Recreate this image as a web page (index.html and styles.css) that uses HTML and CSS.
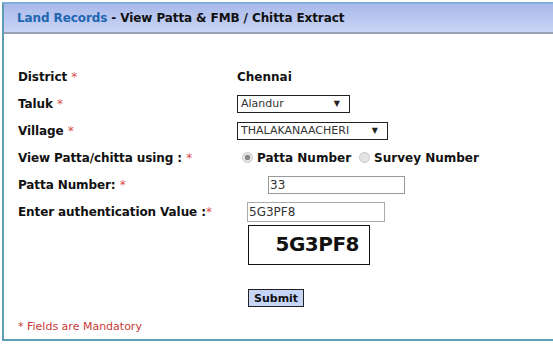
FILE: index.html
```html
<!DOCTYPE html>
<html lang="en">
<head>
  <meta charset="UTF-8" />
  <title>Land Records</title>
  <link rel="stylesheet" href="styles.css">
</head>
<body>
  <div class="panel">
    <div class="panel-head">
      <span class="crumb">Land Records</span> - View Patta &amp; FMB / Chitta Extract
    </div>
    <div class="panel-body">
      <div class="row">
        <div class="lbl">District <span class="req">*</span></div>
        <div class="val val-text">Chennai</div>
      </div>
      <div class="row">
        <div class="lbl">Taluk <span class="req">*</span></div>
        <div class="val"><div class="sel sel-taluk">Alandur <span class="arrow">&#9660;</span></div></div>
      </div>
      <div class="row">
        <div class="lbl">Village <span class="req">*</span></div>
        <div class="val"><div class="sel sel-village">THALAKANAACHERI <span class="arrow">&#9660;</span></div></div>
      </div>
      <div class="row">
        <div class="lbl">View Patta/chitta using : <span class="req">*</span></div>
        <div class="val radios">
          <span class="radio on"></span><span class="opt">Patta Number</span>
          <span class="radio"></span><span class="opt">Survey Number</span>
        </div>
      </div>
      <div class="row">
        <div class="lbl">Patta Number: <span class="req">*</span></div>
        <div class="val"><div class="inp inp-patta">33</div></div>
      </div>
      <div class="row">
        <div class="lbl">Enter authentication Value :<span class="req">*</span></div>
        <div class="val"><div class="inp inp-auth">5G3PF8</div></div>
      </div>
      <div class="row">
        <div class="lbl"></div>
        <div class="val"><div class="captcha">5G3PF8</div></div>
      </div>
      <div class="row">
        <div class="lbl"></div>
        <div class="val"><button class="submit">Submit</button></div>
      </div>
      <div class="note">* Fields are Mandatory</div>
    </div>
  </div>
</body>
</html>
```

FILE: styles.css
```css
body {
  margin: 0;
  background: white;
  font-family: "DejaVu Sans", Verdana, sans-serif;
  color: #111;
}
.panel {
  margin: 2px 0 0 2px;
  height: 335px;
  border: 2px solid #5f9db4;
  border-right: none;
  border-top-color: #7fb0d8;
}
.panel-head {
  height: 28px;
  line-height: 29px;
  padding-left: 13px;
  background: linear-gradient(#a9b9ea, #c9d5f6);
  border-bottom: 2px solid #98a0b4;
  font-size: 12px;
  font-weight: bold;
  color: #111;
  letter-spacing: -0.1px;
}
.crumb {
  color: #2166b0;
}
.panel-body {
  padding: 29px 0 0 14px;
}
.row {
  display: flex;
  align-items: center;
  min-height: 27px;
}
.lbl {
  width: 219px;
  font-size: 12px;
  font-weight: bold;
  letter-spacing: -0.1px;
}
.req {
  color: #d8504e;
  font-weight: normal;
}
.val-text {
  font-size: 12px;
  font-weight: bold;
}
.sel {
  box-sizing: border-box;
  height: 18px;
  border: 1px solid #222;
  font-size: 11px;
  line-height: 16px;
  padding-left: 3px;
  color: #333;
  display: flex;
  justify-content: space-between;
}
.sel-taluk {
  width: 113px;
}
.sel-village {
  width: 151px;
}
.arrow {
  font-size: 8px;
  margin-right: 9px;
  color: #222;
}
.radios {
  display: flex;
  align-items: center;
  padding-left: 5px;
}
.radio {
  width: 11px;
  height: 11px;
  border-radius: 50%;
  background: #e4e4e4;
  border: 1px solid #c8c8c8;
  box-sizing: border-box;
  margin-right: 4px;
}
.radio.on {
  background: radial-gradient(circle, #888 0 2.5px, #e4e4e4 3px);
}
.opt {
  font-size: 12px;
  font-weight: bold;
  margin-right: 8px;
}
.inp {
  box-sizing: border-box;
  border: 1px solid #999;
  font-size: 12px;
  color: #333;
  padding-left: 1px;
}
.inp-patta {
  margin-left: 31px;
  width: 137px;
  height: 18px;
  line-height: 16px;
}
.inp-auth {
  margin-left: 10px;
  width: 138px;
  height: 20px;
  line-height: 18px;
  border-color: #aaa;
}
.captcha {
  margin: 0 0 0 11px;
  box-sizing: border-box;
  width: 122px;
  height: 40px;
  border: 1px solid #111;
  font-size: 20px;
  font-weight: bold;
  text-align: right;
  padding-right: 10px;
  line-height: 37px;
  letter-spacing: -0.5px;
}
.submit {
  margin: 24px 0 0 11px;
  font-family: "DejaVu Sans", Verdana, sans-serif;
  font-size: 11px;
  font-weight: bold;
  background: #c6d4f6;
  border: 1px solid #222;
  padding: 1px 5px;
  height: 18px;
  color: #111;
}
.note {
  margin-top: 13px;
  font-size: 11px;
  color: #c83a38;
}
```
